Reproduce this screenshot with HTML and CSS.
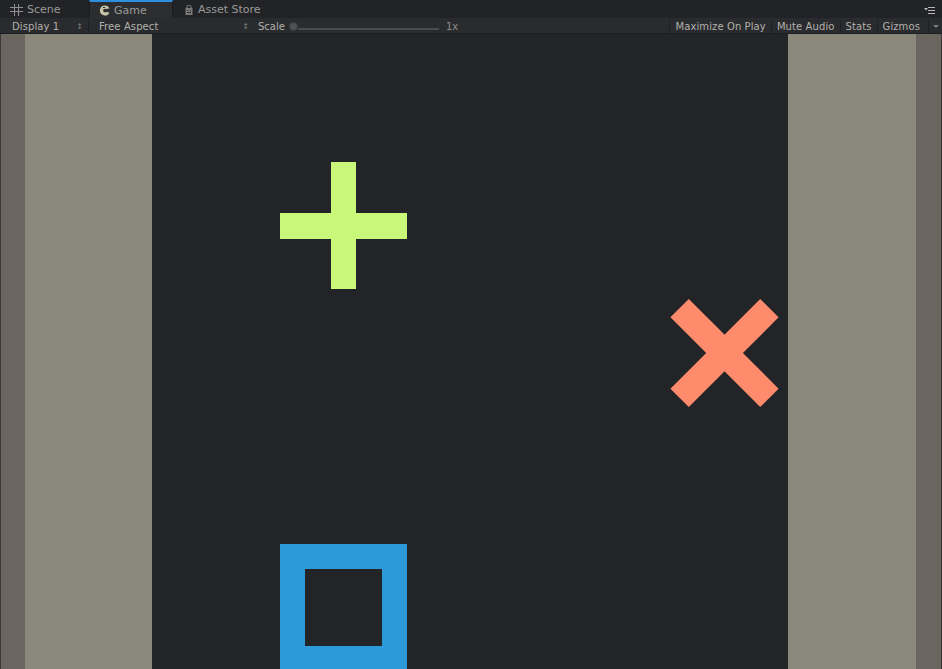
FILE: index.html
```html
<!DOCTYPE html>
<html>
<head>
<meta charset="utf-8">
<link rel="stylesheet" href="styles.css">
</head>
<body>
<div class="window">
  <div class="tabbar">
    <div class="tab tab-scene">
      <svg class="ico" width="13" height="12" viewBox="0 0 13 12"><g stroke="#8e8e8e" stroke-width="1" fill="none"><line x1="4.5" y1="0" x2="4.5" y2="12"/><line x1="8.5" y1="0" x2="8.5" y2="12"/><line x1="0" y1="3.5" x2="13" y2="3.5"/><line x1="0" y1="7.5" x2="13" y2="7.5"/></g></svg>
      <span>Scene</span>
    </div>
    <div class="tab tab-game active">
      <svg class="ico" width="10" height="11" viewBox="0 0 10 11"><path d="M5 0.5 A5 5 0 1 0 9.5 7.5 L6 7 A1.8 1.8 0 1 1 6 4 L9.5 3.5 A5 5 0 0 0 5 0.5 Z" fill="#c8c4a8"/><rect x="3" y="2" width="2" height="1" fill="#2d2e31"/></svg>
      <span>Game</span>
    </div>
    <div class="tab tab-store">
      <svg class="ico" width="8" height="10" viewBox="0 0 8 10"><path d="M2 3 V1.5 A2 1.5 0 0 1 6 1.5 V3" stroke="#8a8a8a" fill="none"/><rect x="0.5" y="3" width="7" height="7" fill="#7a7a7a"/><rect x="2" y="5" width="1" height="1" fill="#2a2a2a"/><rect x="5" y="5" width="1" height="1" fill="#2a2a2a"/><rect x="2" y="7" width="4" height="1" fill="#2a2a2a"/></svg>
      <span>Asset Store</span>
    </div>
    <div class="tabfill"></div>
    <div class="tabmenu">
      <svg width="11" height="7" viewBox="0 0 11 7"><path d="M0 1 H4 L2 3.5 Z" fill="#b8b8b8"/><rect x="4" y="0" width="7" height="1" fill="#b8b8b8"/><rect x="4" y="3" width="7" height="1" fill="#b8b8b8"/><rect x="4" y="6" width="7" height="1" fill="#b8b8b8"/></svg>
    </div>
  </div>
  <div class="toolbar">
    <div class="tbtn drop display"><span>Display 1</span><span class="spin">&#x2195;</span></div>
    <div class="tbtn drop aspect"><span>Free Aspect</span><span class="spin">&#x2195;</span></div>
    <div class="scale">
      <span>Scale</span>
      <div class="slider"><div class="thumb"></div><div class="track"></div></div>
      <span class="sval">1x</span>
    </div>
    <div class="tbfill"></div>
    <div class="tbtn">Maximize On Play</div>
    <div class="tbtn">Mute Audio</div>
    <div class="tbtn">Stats</div>
    <div class="tbtn gizmos">Gizmos</div>
    <div class="tbtn arrowbtn"><span class="tri"></span></div>
  </div>
  <div class="main">
    <div class="edge"></div>
    <div class="letterbox"></div>
    <div class="gameview">
      <div class="plus-v"></div>
      <div class="plus-h"></div>
      <div class="cross cross-a"></div>
      <div class="cross cross-b"></div>
      <div class="square"></div>
    </div>
    <div class="letterbox right"></div>
    <div class="edge right"></div>
  </div>
</div>
</body>
</html>
```
FILE: styles.css
```css
html, body {
  margin: 0;
  padding: 0;
  width: 942px;
  height: 669px;
  overflow: hidden;
  background: #232427;
}
.window {
  width: 942px;
  height: 669px;
  display: flex;
  flex-direction: column;
  font-family: "DejaVu Sans", sans-serif;
}
.tabbar {
  height: 18px;
  display: flex;
  align-items: stretch;
  background: #222326;
  color: #9a9a98;
  font-size: 11px;
}
.tab {
  display: flex;
  align-items: center;
  gap: 4px;
  box-sizing: border-box;
  padding-top: 1px;
}
.tab-scene { width: 89px; padding-left: 10px; }
.tab-game {
  width: 84px;
  padding-left: 10px;
  background: #2c2d30;
  border-top: 2px solid #2d8fe0;
  border-left: 1px solid #1a1b1d;
  border-right: 1px solid #1a1b1d;
  gap: 4px;
  padding-top: 0;
}
.tab-store { padding-left: 12px; gap: 5px; }
.tabfill { flex: 1; }
.tabmenu {
  width: 18px;
  display: flex;
  align-items: flex-end;
  padding-bottom: 4px;
  box-sizing: border-box;
}
.toolbar {
  height: 16px;
  display: flex;
  align-items: stretch;
  background: #2a2b2e;
  color: #b2b1ad;
  font-size: 10px;
  box-sizing: border-box;
  border-bottom: 1px solid #1e1f21;
  padding-top: 2px;
}
.tbtn {
  display: flex;
  align-items: center;
  padding: 0 5px;
  border-left: 1px solid #1f2022;
  white-space: nowrap;
  letter-spacing: 0.1px;
}
.drop { justify-content: space-between; box-sizing: border-box; }
.display { width: 88px; padding-left: 12px; border-left: none; }
.aspect { width: 166px; padding-left: 10px; }
.spin { font-size: 8px; color: #7a7a78; }
.scale {
  display: flex;
  align-items: center;
  padding-left: 4px;
  gap: 4px;
}
.slider {
  width: 150px;
  height: 14px;
  display: flex;
  align-items: center;
}
.thumb {
  width: 9px;
  height: 9px;
  border-radius: 50%;
  background: #505153;
  border: 1px solid #3c3d3f;
  box-sizing: border-box;
}
.track {
  width: 141px;
  height: 2px;
  margin-top: 4px;
  background: #4a4b4d;
}
.sval { color: #8c8c8a; padding-left: 3px; }
.tbfill { flex: 1; }
.gizmos { padding-right: 8px; }
.arrowbtn { width: 14px; box-sizing: border-box; padding: 0 4px; }
.tri {
  width: 0;
  height: 0;
  border-left: 3px solid transparent;
  border-right: 3px solid transparent;
  border-top: 3px solid #7c7c7a;
}
.main {
  flex: 1;
  display: flex;
}
.edge { width: 25px; background: #6a655e; border-left: 1px solid #3a3937; box-sizing: border-box; }
.edge.right { width: 26px; border-left: none; border-right: 1px solid #3a3937; }
.letterbox { width: 127px; background: #8a877b; }
.letterbox.right { width: 128px; }
.gameview {
  width: 636px;
  position: relative;
  background-color: #232427;
  background-image: radial-gradient(circle, #28292c 0.6px, transparent 0.7px);
  background-size: 6px 6px;
  overflow: hidden;
}
.plus-v {
  position: absolute;
  left: 179px;
  top: 128px;
  width: 25px;
  height: 127px;
  background: #c9f779;
}
.plus-h {
  position: absolute;
  left: 128px;
  top: 179px;
  width: 127px;
  height: 26px;
  background: #c9f779;
}
.cross {
  position: absolute;
  left: 509px;
  top: 306px;
  width: 127px;
  height: 26px;
  background: #ff8b6d;
}
.cross-a { transform: rotate(45deg); }
.cross-b { transform: rotate(-45deg); }
.square {
  position: absolute;
  left: 128px;
  top: 510px;
  width: 127px;
  height: 127px;
  border: 25px solid #2c9ad9;
  box-sizing: border-box;
}
```
